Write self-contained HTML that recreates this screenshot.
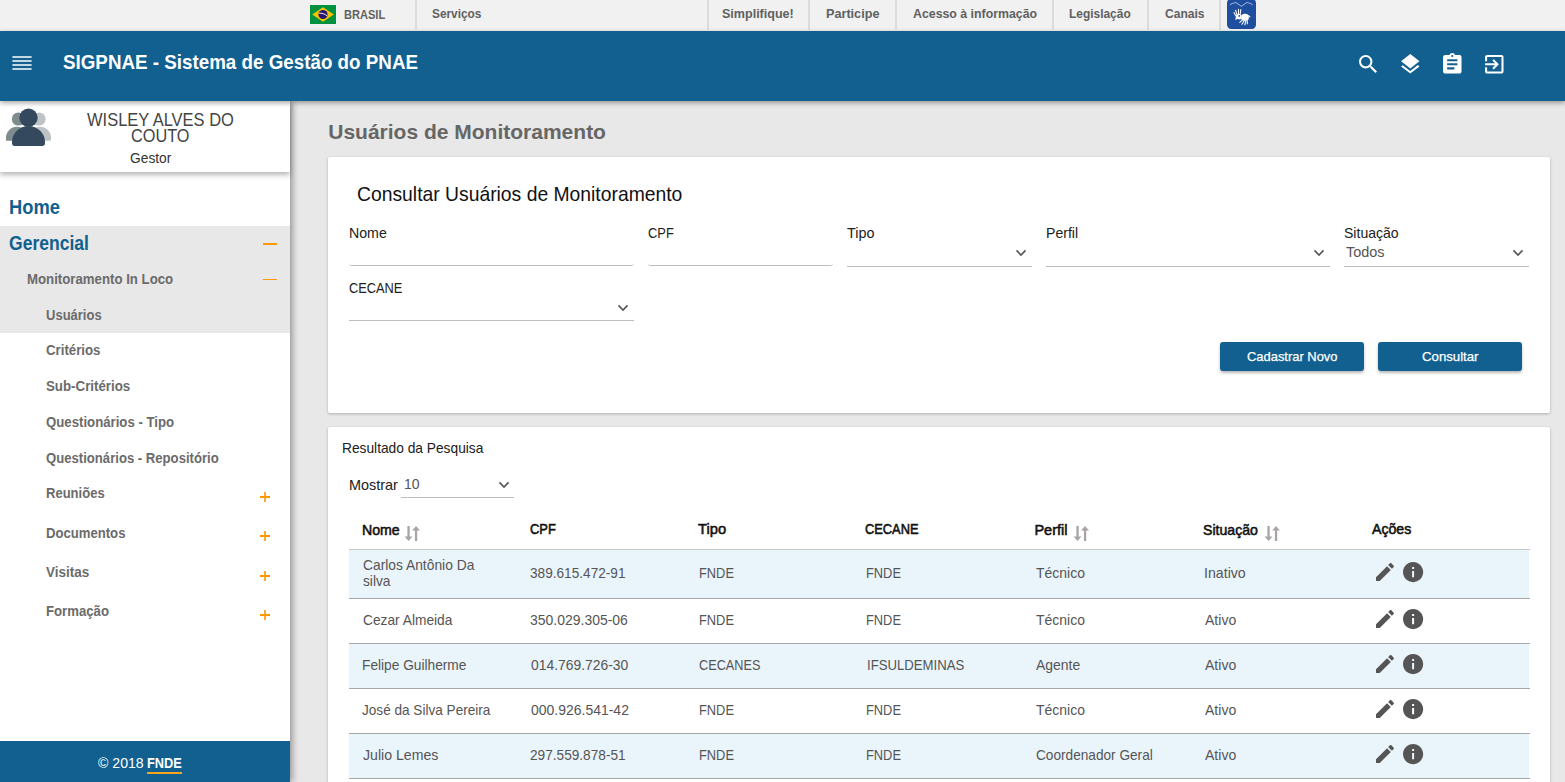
<!DOCTYPE html>
<html lang="pt-BR">
<head>
<meta charset="utf-8">
<title>SIGPNAE - Sistema de Gestão do PNAE</title>
<style>

*{box-sizing:border-box;margin:0;padding:0}
html,body{width:1565px;height:782px;overflow:hidden}
body{font-family:"Liberation Sans",sans-serif;background:#e8e8e8;color:#212121;position:relative;font-size:14px}
.t{position:absolute;white-space:nowrap;transform-origin:0 0;z-index:20}
.a{position:absolute}
#barra{left:0;top:0;width:1565px;height:31px;background:#f1f1f1}
.sep{position:absolute;top:0;width:2px;height:30px;background:#dcdcdc}
#hdr{left:0;top:31px;width:1565px;height:70px;background:#11608f;box-shadow:0 2px 5px rgba(0,0,0,.35);z-index:5}
#side{left:0;top:101px;width:290px;height:681px;background:#fff;box-shadow:2px 0 7px rgba(0,0,0,.4);z-index:3}
#user{left:0;top:0;width:290px;height:71px;background:#fff;box-shadow:0 3px 5px rgba(0,0,0,.28)}
.sel{left:0;width:290px;background:#e8e8e8}
.or{background:#ff9800}
#foot{left:0;top:640px;width:290px;height:41px;background:#11608f}
.card{left:328px;width:1222px;background:#fff;border-radius:2px;box-shadow:0 1px 3px rgba(0,0,0,.25)}
.ul{position:absolute;height:1px;background:#bdbdbd}
.inp{position:absolute;height:6px;border-bottom:1px solid #bdbdbd;border-radius:3px}
.btn{position:absolute;height:29px;width:144px;background:#11608f;border-radius:3px;box-shadow:0 2px 3px rgba(0,0,0,.28)}
.row{position:absolute;left:349px;width:1180px}
.odd{background:#eaf4fb}
.bl{position:absolute;left:349px;width:1181px;height:1px;background:#a8a8a8}
svg{position:absolute;overflow:visible}

</style>
</head>
<body>

<div class="a" id="barra">
  <svg style="left:310px;top:5px" width="26" height="19" viewBox="0 0 26 19"><rect width="26" height="19" fill="#00923f"/><path d="M13 2.3L23.8 9.5L13 16.7L2.2 9.5z" fill="#f8c300"/><circle cx="13" cy="9.5" r="4.6" fill="#28166f"/><path d="M8.9 8.2C11.5 7.9 14.8 8.9 17.2 10.8" fill="none" stroke="#fff" stroke-width="0.9"/></svg>
  <div class="sep" style="left:415px"></div>
  <div class="sep" style="left:707px"></div>
  <div class="sep" style="left:808px"></div>
  <div class="sep" style="left:895px"></div>
  <div class="sep" style="left:1052px"></div>
  <div class="sep" style="left:1147px"></div>
  <div class="sep" style="left:1219px"></div>
  <svg style="left:1227px;top:0" width="29" height="29" viewBox="0 0 29 29"><rect x="0" y="-1.2" width="29" height="30.2" rx="4.2" fill="#1f4e9e"/><path d="M2.8 5.2C4.2 3.6 6.2 3 9 2.6l5.3 3.7L19.6 2.6c2.8.4 4.8 1 6.2 2.6" fill="none" stroke="#b9c6e2" stroke-width="0.9"/><g stroke="#fff" stroke-linecap="round" fill="none"><path d="M11.5 14V9.2M13.2 14.2l.6-4.6M9.9 14.6L8.6 10.2M8.9 16L7 12.6" stroke-width="1.1"/><path d="M16.4 19.2l-3.6 3.2M17.6 20l-2.6 4.2M18.9 20.4l-1 4.2M20.1 20l.3 3.7M21.6 15.6l1.3 1.2" stroke-width="1.1"/></g><path d="M9.2 15.2c1.2-1.4 3.2-1.6 4.4-.9l1.4 1.6-1.6 3.6-2.9-.4-2.3 1z" fill="#fff"/><path d="M14.6 15c1.6-1.4 4.6-1.7 6.2-.6 1.2 1 1.4 3.6.6 5.4l-5 .9-2.4-1.8z" fill="#fff"/><circle cx="12.3" cy="15.9" r="0.9" fill="#1f4e9e"/></svg>
</div>
<div class="a" id="hdr">
  <svg style="left:0;top:0" width="40" height="70" viewBox="0 0 40 70"><path d="M12.4 25.15h19.2v1.7H12.4zM12.4 29.15h19.2v1.7H12.4zM12.4 33.15h19.2v1.7H12.4zM12.4 37.15h19.2v1.7H12.4z" fill="#fff"/></svg>
  <svg style="left:1356.1px;top:21px;z-index:20" width="24.6" height="24.6" viewBox="0 0 24 24"><path d="M15.5 14h-.79l-.28-.27C15.41 12.59 16 11.11 16 9.5 16 5.91 13.09 3 9.5 3S3 5.91 3 9.5 5.91 16 9.5 16c1.61 0 3.09-.59 4.23-1.57l.27.28v.79l5 4.99L20.49 19l-4.99-5zm-6 0C7.01 14 5 11.99 5 9.5S7.01 5 9.5 5 14 7.01 14 9.5 11.99 14 9.5 14z" fill="#fff"/></svg>
  <svg style="left:1398.1px;top:21px;z-index:20" width="24.6" height="24.6" viewBox="0 0 24 24"><path d="M11.99 18.54l-7.37-5.73L3 14.07l9 7 9-7-1.63-1.27-7.38 5.74zM12 16l7.36-5.73L21 9l-9-7-9 7 1.63 1.27L12 16z" fill="#fff"/></svg>
  <svg style="left:1440.1px;top:21px;z-index:20" width="24.6" height="24.6" viewBox="0 0 24 24"><path d="M19 3h-4.18C14.4 1.84 13.3 1 12 1c-1.3 0-2.4.84-2.82 2H5c-1.1 0-2 .9-2 2v14c0 1.1.9 2 2 2h14c1.1 0 2-.9 2-2V5c0-1.1-.9-2-2-2zm-7 0c.55 0 1 .45 1 1s-.45 1-1 1-1-.45-1-1 .45-1 1-1zm2 14H7v-2h7v2zm3-4H7v-2h10v2zm0-4H7V7h10v2z" fill="#fff"/></svg>
  <svg style="left:1482.1px;top:21px;z-index:20" width="24.6" height="24.6" viewBox="0 0 24 24"><path d="M10.09 15.59L11.5 17l5-5-5-5-1.41 1.41L12.67 11H3v2h9.67l-2.58 2.59zM19 3H5c-1.11 0-2 .9-2 2v4h2V5h14v14H5v-4H3v4c0 1.1.89 2 2 2h14c1.1 0 2-.9 2-2V5c0-1.1-.9-2-2-2z" fill="#fff"/></svg>
</div>
<div class="a" id="side">
  <div class="a" id="user">
    <svg style="left:4px;top:5px" width="50" height="42" viewBox="4 106 50 42">
      <circle cx="18.4" cy="119" r="6.6" fill="#7f8c8d"/><path d="M6 140.8v-3a11 11 0 0 1 22 0v3z" fill="#7f8c8d"/>
      <circle cx="39" cy="119" r="6.6" fill="#bdc3c7"/><path d="M29 140.8v-3a11 11 0 0 1 22 0v1.5a1.5 1.5 0 0 1-1.5 1.5z" fill="#bdc3c7"/>
      <circle cx="28.5" cy="117.8" r="9.2" fill="#34495e"/><path d="M12 143.5v-1.5a16.5 16 0 0 1 33 0v1.5a2.4 2.4 0 0 1-2.4 2.4h-28.2a2.4 2.4 0 0 1-2.4-2.4z" fill="#34495e"/>
    </svg>
  </div>
  <div class="a sel" style="top:125px;height:107px"></div>
  <div class="a or" style="left:263px;top:142px;width:14px;height:2px"></div>
  <div class="a or" style="left:263px;top:178px;width:14px;height:1px"></div>
  <div class="a" style="left:264px;top:391px;width:2px;height:10px;z-index:20;background:#ffa930"></div><div class="a or" style="left:260px;top:395px;width:10px;height:2px;z-index:20"></div>
  <div class="a" style="left:264px;top:430px;width:2px;height:10px;z-index:20;background:#ffa930"></div><div class="a or" style="left:260px;top:434px;width:10px;height:2px;z-index:20"></div>
  <div class="a" style="left:264px;top:470px;width:2px;height:10px;z-index:20;background:#ffa930"></div><div class="a or" style="left:260px;top:474px;width:10px;height:2px;z-index:20"></div>
  <div class="a" style="left:264px;top:509px;width:2px;height:10px;z-index:20;background:#ffa930"></div><div class="a or" style="left:260px;top:513px;width:10px;height:2px;z-index:20"></div>
  <div class="a" id="foot"></div>
  <div class="a" style="left:147px;top:671px;width:35px;height:2px;z-index:21;background:#f9a61c"></div>
</div>
<div class="a card" style="top:157px;height:256px">
  <div class="inp" style="left:21px;top:103px;width:285px"></div>
  <div class="inp" style="left:320px;top:103px;width:185px"></div>
  <div class="ul" style="left:519px;top:109px;width:185px"></div>
  <div class="ul" style="left:718px;top:109px;width:284px"></div>
  <div class="ul" style="left:1016px;top:109px;width:185px"></div>
  <div class="ul" style="left:21px;top:163px;width:285px"></div>
  <div class="btn" style="left:892px;top:185px"></div>
  <div class="btn" style="left:1050px;top:185px"></div>
</div>
<svg style="left:1016px;top:250px;z-index:20" width="10" height="6" viewBox="0 0 10 6"><path d="M0.5 0.4L5 5.1L9.5 0.4" fill="none" stroke="#555" stroke-width="1.6"/></svg><svg style="left:1314px;top:250px;z-index:20" width="10" height="6" viewBox="0 0 10 6"><path d="M0.5 0.4L5 5.1L9.5 0.4" fill="none" stroke="#555" stroke-width="1.6"/></svg><svg style="left:1513px;top:250px;z-index:20" width="10" height="6" viewBox="0 0 10 6"><path d="M0.5 0.4L5 5.1L9.5 0.4" fill="none" stroke="#555" stroke-width="1.6"/></svg><svg style="left:618px;top:305px;z-index:20" width="10" height="6" viewBox="0 0 10 6"><path d="M0.5 0.4L5 5.1L9.5 0.4" fill="none" stroke="#555" stroke-width="1.6"/></svg>
<div class="a card" style="top:427px;height:400px">
  <div class="ul" style="left:73px;top:70px;width:113px"></div>
</div>
<svg style="left:499px;top:482px;z-index:20" width="10" height="6" viewBox="0 0 10 6"><path d="M0.5 0.4L5 5.1L9.5 0.4" fill="none" stroke="#555" stroke-width="1.6"/></svg>
<div class="bl" style="top:549px;background:#c8c8c8"></div>
<div class="row odd" style="top:550px;height:48px"></div><div class="bl" style="top:598px"></div>
<svg style="left:1372.8px;top:560px;z-index:20" width="24" height="24" viewBox="0 0 24 24"><path d="M3 17.25V21h3.75L17.81 9.94l-3.75-3.75L3 17.25zM20.71 7.04c.39-.39.39-1.02 0-1.41l-2.34-2.34c-.39-.39-1.02-.39-1.41 0l-1.83 1.83 3.75 3.75 1.83-1.83z" fill="#555"/></svg><svg style="left:1400.5px;top:559.9px;z-index:20" width="24.2" height="24.2" viewBox="0 0 24 24"><path d="M12 2C6.48 2 2 6.48 2 12s4.48 10 10 10 10-4.48 10-10S17.52 2 12 2zm1 15h-2v-6h2v6zm0-8h-2V7h2v2z" fill="#555"/></svg>
<div class="row" style="top:599px;height:44px"></div><div class="bl" style="top:643px"></div>
<svg style="left:1372.8px;top:607px;z-index:20" width="24" height="24" viewBox="0 0 24 24"><path d="M3 17.25V21h3.75L17.81 9.94l-3.75-3.75L3 17.25zM20.71 7.04c.39-.39.39-1.02 0-1.41l-2.34-2.34c-.39-.39-1.02-.39-1.41 0l-1.83 1.83 3.75 3.75 1.83-1.83z" fill="#555"/></svg><svg style="left:1400.5px;top:606.9px;z-index:20" width="24.2" height="24.2" viewBox="0 0 24 24"><path d="M12 2C6.48 2 2 6.48 2 12s4.48 10 10 10 10-4.48 10-10S17.52 2 12 2zm1 15h-2v-6h2v6zm0-8h-2V7h2v2z" fill="#555"/></svg>
<div class="row odd" style="top:644px;height:44px"></div><div class="bl" style="top:688px"></div>
<svg style="left:1372.8px;top:652px;z-index:20" width="24" height="24" viewBox="0 0 24 24"><path d="M3 17.25V21h3.75L17.81 9.94l-3.75-3.75L3 17.25zM20.71 7.04c.39-.39.39-1.02 0-1.41l-2.34-2.34c-.39-.39-1.02-.39-1.41 0l-1.83 1.83 3.75 3.75 1.83-1.83z" fill="#555"/></svg><svg style="left:1400.5px;top:651.9px;z-index:20" width="24.2" height="24.2" viewBox="0 0 24 24"><path d="M12 2C6.48 2 2 6.48 2 12s4.48 10 10 10 10-4.48 10-10S17.52 2 12 2zm1 15h-2v-6h2v6zm0-8h-2V7h2v2z" fill="#555"/></svg>
<div class="row" style="top:689px;height:44px"></div><div class="bl" style="top:733px"></div>
<svg style="left:1372.8px;top:697px;z-index:20" width="24" height="24" viewBox="0 0 24 24"><path d="M3 17.25V21h3.75L17.81 9.94l-3.75-3.75L3 17.25zM20.71 7.04c.39-.39.39-1.02 0-1.41l-2.34-2.34c-.39-.39-1.02-.39-1.41 0l-1.83 1.83 3.75 3.75 1.83-1.83z" fill="#555"/></svg><svg style="left:1400.5px;top:696.9px;z-index:20" width="24.2" height="24.2" viewBox="0 0 24 24"><path d="M12 2C6.48 2 2 6.48 2 12s4.48 10 10 10 10-4.48 10-10S17.52 2 12 2zm1 15h-2v-6h2v6zm0-8h-2V7h2v2z" fill="#555"/></svg>
<div class="row odd" style="top:734px;height:44px"></div><div class="bl" style="top:778px"></div>
<svg style="left:1372.8px;top:742px;z-index:20" width="24" height="24" viewBox="0 0 24 24"><path d="M3 17.25V21h3.75L17.81 9.94l-3.75-3.75L3 17.25zM20.71 7.04c.39-.39.39-1.02 0-1.41l-2.34-2.34c-.39-.39-1.02-.39-1.41 0l-1.83 1.83 3.75 3.75 1.83-1.83z" fill="#555"/></svg><svg style="left:1400.5px;top:741.9px;z-index:20" width="24.2" height="24.2" viewBox="0 0 24 24"><path d="M12 2C6.48 2 2 6.48 2 12s4.48 10 10 10 10-4.48 10-10S17.52 2 12 2zm1 15h-2v-6h2v6zm0-8h-2V7h2v2z" fill="#555"/></svg>

<svg style="left:405px;top:526px;z-index:20" width="15" height="15" viewBox="0 0 15 15"><path d="M2.4 0h2.3v10.4h2.8l-3.95 4.6l-3.95-4.6h2.8z" fill="#a6a6a6"/><path d="M9.9 15h2.3V4.6h2.8l-3.95-4.6l-3.95 4.6h2.8z" fill="#aaa4a8"/></svg><svg style="left:1074px;top:526px;z-index:20" width="15" height="15" viewBox="0 0 15 15"><path d="M2.4 0h2.3v10.4h2.8l-3.95 4.6l-3.95-4.6h2.8z" fill="#a6a6a6"/><path d="M9.9 15h2.3V4.6h2.8l-3.95-4.6l-3.95 4.6h2.8z" fill="#aaa4a8"/></svg><svg style="left:1265px;top:526px;z-index:20" width="15" height="15" viewBox="0 0 15 15"><path d="M2.4 0h2.3v10.4h2.8l-3.95 4.6l-3.95-4.6h2.8z" fill="#a6a6a6"/><path d="M9.9 15h2.3V4.6h2.8l-3.95-4.6l-3.95 4.6h2.8z" fill="#aaa4a8"/></svg>
<div id="barra-brasil-links">
<a class="t" style="left:343.84px;top:7.00px;font:700 12.5px/16px 'Liberation Sans',sans-serif;color:#606060;transform:scaleX(0.8846)">BRASIL</a>
<a class="t" style="left:431.57px;top:6.00px;font:700 12.5px/16px 'Liberation Sans',sans-serif;color:#606060;transform:scaleX(0.9486)">Serviços</a>
<a class="t" style="left:722.15px;top:6.00px;font:700 12.5px/16px 'Liberation Sans',sans-serif;color:#606060;transform:scaleX(1.0028)">Simplifique!</a>
<a class="t" style="left:825.90px;top:6.00px;font:700 12.5px/16px 'Liberation Sans',sans-serif;color:#606060;transform:scaleX(1.0119)">Participe</a>
<a class="t" style="left:912.76px;top:6.00px;font:700 12.5px/16px 'Liberation Sans',sans-serif;color:#606060;transform:scaleX(0.9867)">Acesso à informação</a>
<a class="t" style="left:1068.95px;top:6.00px;font:700 12.5px/16px 'Liberation Sans',sans-serif;color:#606060;transform:scaleX(0.9547)">Legislação</a>
<a class="t" style="left:1164.52px;top:6.00px;font:700 12.5px/16px 'Liberation Sans',sans-serif;color:#606060;transform:scaleX(0.9625)">Canais</a>
</div>
<header>
<h1 class="t" style="left:63.04px;top:49.00px;font:700 20.5px/26px 'Liberation Sans',sans-serif;color:#fff;transform:scaleX(0.9165)">SIGPNAE - Sistema de Gestão do PNAE</h1>
</header>
<section id="perfil">
<span class="t" style="left:86.70px;top:108.00px;font:400 18.5px/24px 'Liberation Sans',sans-serif;color:#444;transform:scaleX(0.8909)">WISLEY ALVES DO</span>
<span class="t" style="left:131.22px;top:124.00px;font:400 18.5px/24px 'Liberation Sans',sans-serif;color:#444;transform:scaleX(0.8798)">COUTO</span>
<span class="t" style="left:129.78px;top:149.00px;font:400 14.5px/18px 'Liberation Sans',sans-serif;color:#333;transform:scaleX(0.9509)">Gestor</span>
</section>
<nav>
<a class="t" style="left:8.95px;top:195.00px;font:700 20px/25px 'Liberation Sans',sans-serif;color:#11608f;transform:scaleX(0.9163)">Home</a>
<a class="t" style="left:9.14px;top:231.00px;font:700 20px/25px 'Liberation Sans',sans-serif;color:#11608f;transform:scaleX(0.8764)">Gerencial</a>
<a class="t" style="left:27.19px;top:270.00px;font:700 14.5px/18px 'Liberation Sans',sans-serif;color:#6b6b6b;transform:scaleX(0.9120)">Monitoramento In Loco</a>
<a class="t" style="left:46.23px;top:306.00px;font:700 14.5px/18px 'Liberation Sans',sans-serif;color:#6b6b6b;transform:scaleX(0.8971)">Usuários</a>
<a class="t" style="left:46.35px;top:341.00px;font:700 14.5px/18px 'Liberation Sans',sans-serif;color:#6b6b6b;transform:scaleX(0.9136)">Critérios</a>
<a class="t" style="left:46.37px;top:377.00px;font:700 14.5px/18px 'Liberation Sans',sans-serif;color:#6b6b6b;transform:scaleX(0.9171)">Sub-Critérios</a>
<a class="t" style="left:46.19px;top:413.00px;font:700 14.5px/18px 'Liberation Sans',sans-serif;color:#6b6b6b;transform:scaleX(0.9106)">Questionários - Tipo</a>
<a class="t" style="left:46.25px;top:449.00px;font:700 14.5px/18px 'Liberation Sans',sans-serif;color:#6b6b6b;transform:scaleX(0.9045)">Questionários - Repositório</a>
<a class="t" style="left:46.03px;top:484.00px;font:700 14.5px/18px 'Liberation Sans',sans-serif;color:#6b6b6b;transform:scaleX(0.8986)">Reuniões</a>
<a class="t" style="left:46.00px;top:524.00px;font:700 14.5px/18px 'Liberation Sans',sans-serif;color:#6b6b6b;transform:scaleX(0.9044)">Documentos</a>
<a class="t" style="left:46.15px;top:563.00px;font:700 14.5px/18px 'Liberation Sans',sans-serif;color:#6b6b6b;transform:scaleX(0.9293)">Visitas</a>
<a class="t" style="left:45.89px;top:602.00px;font:700 14.5px/18px 'Liberation Sans',sans-serif;color:#6b6b6b;transform:scaleX(0.9082)">Formação</a>
</nav>
<footer>
<span class="t" style="left:98.06px;top:754.00px;font:400 14.5px/18px 'Liberation Sans',sans-serif;color:#fff;transform:scaleX(0.9728)">© 2018</span>
<b class="t" style="left:147.12px;top:754.00px;font:700 14.5px/18px 'Liberation Sans',sans-serif;color:#fff;transform:scaleX(0.8816)">FNDE</b>
</footer>
<main>
<h2 class="t" style="left:328.25px;top:118.00px;font:700 21px/27px 'Liberation Sans',sans-serif;color:#666">Usuários de Monitoramento</h2>

<section id="consulta">
<h3 class="t" style="left:356.62px;top:182.00px;font:400 19.75px/25px 'Liberation Sans',sans-serif;color:#111;transform:scaleX(0.9781)">Consultar Usuários de Monitoramento</h3>
<label class="t" style="left:348.80px;top:224.00px;font:400 14.5px/18px 'Liberation Sans',sans-serif;color:#212121;transform:scaleX(0.9773)">Nome</label>
<label class="t" style="left:648.05px;top:224.00px;font:400 14.5px/18px 'Liberation Sans',sans-serif;color:#212121;transform:scaleX(0.8877)">CPF</label>
<label class="t" style="left:847.25px;top:224.00px;font:400 14.5px/18px 'Liberation Sans',sans-serif;color:#212121;transform:scaleX(0.9907)">Tipo</label>
<label class="t" style="left:1045.99px;top:224.00px;font:400 14.5px/18px 'Liberation Sans',sans-serif;color:#212121;transform:scaleX(0.9696)">Perfil</label>
<label class="t" style="left:1344.27px;top:224.00px;font:400 14.5px/18px 'Liberation Sans',sans-serif;color:#212121;transform:scaleX(0.9683)">Situação</label>
<span class="t" style="left:1346.00px;top:243.00px;font:400 14.5px/18px 'Liberation Sans',sans-serif;color:#555;transform:scaleX(0.9973)">Todos</span>
<label class="t" style="left:349.25px;top:279.00px;font:400 14.5px/18px 'Liberation Sans',sans-serif;color:#212121;transform:scaleX(0.8840)">CECANE</label>
<span class="t" style="left:1247.18px;top:348.00px;font:400 13.5px/17px 'Liberation Sans',sans-serif;color:#fff;transform:scaleX(0.9571);-webkit-text-stroke:0.25px #fff">Cadastrar Novo</span>
<span class="t" style="left:1422.37px;top:348.00px;font:400 13.5px/17px 'Liberation Sans',sans-serif;color:#fff;transform:scaleX(0.9781);-webkit-text-stroke:0.25px #fff">Consultar</span>
</section>
<section id="resultado">
<h3 class="t" style="left:341.91px;top:439.00px;font:400 14.5px/18px 'Liberation Sans',sans-serif;color:#212121;transform:scaleX(0.9478)">Resultado da Pesquisa</h3>
<label class="t" style="left:348.73px;top:476.00px;font:400 14.5px/18px 'Liberation Sans',sans-serif;color:#212121;transform:scaleX(0.9952)">Mostrar</label>
<span class="t" style="left:404.23px;top:475.00px;font:400 14.5px/18px 'Liberation Sans',sans-serif;color:#555;transform:scaleX(0.9655)">10</span>
<strong class="t" style="left:361.66px;top:521.00px;font:400 14.5px/18px 'Liberation Sans',sans-serif;color:#111;transform:scaleX(0.9745);-webkit-text-stroke:0.55px #111">Nome</strong>
<strong class="t" style="left:529.53px;top:520.00px;font:400 14.5px/18px 'Liberation Sans',sans-serif;color:#111;transform:scaleX(0.8906);-webkit-text-stroke:0.55px #111">CPF</strong>
<strong class="t" style="left:698.24px;top:520.00px;font:400 14.5px/18px 'Liberation Sans',sans-serif;color:#111;transform:scaleX(1.0138);-webkit-text-stroke:0.55px #111">Tipo</strong>
<strong class="t" style="left:865.24px;top:520.00px;font:400 14.5px/18px 'Liberation Sans',sans-serif;color:#111;transform:scaleX(0.8856);-webkit-text-stroke:0.55px #111">CECANE</strong>
<strong class="t" style="left:1034.43px;top:521.00px;font:400 14.5px/18px 'Liberation Sans',sans-serif;color:#111;-webkit-text-stroke:0.55px #111">Perfil</strong>
<strong class="t" style="left:1203.37px;top:521.00px;font:400 14.5px/18px 'Liberation Sans',sans-serif;color:#111;transform:scaleX(0.9729);-webkit-text-stroke:0.55px #111">Situação</strong>
<strong class="t" style="left:1372.40px;top:520.00px;font:400 14.5px/18px 'Liberation Sans',sans-serif;color:#111;transform:scaleX(0.9748);-webkit-text-stroke:0.55px #111">Ações</strong>
<span class="t" style="left:362.64px;top:556.00px;font:400 14.5px/18px 'Liberation Sans',sans-serif;color:#555;transform:scaleX(0.9524)">Carlos Antônio Da</span>
<span class="t" style="left:362.53px;top:572.00px;font:400 14.5px/18px 'Liberation Sans',sans-serif;color:#555;transform:scaleX(0.9474)">silva</span>
<span class="t" style="left:530.43px;top:564.00px;font:400 14.5px/18px 'Liberation Sans',sans-serif;color:#555;transform:scaleX(0.9403)">389.615.472-91</span>
<span class="t" style="left:698.56px;top:564.00px;font:400 14.5px/18px 'Liberation Sans',sans-serif;color:#555;transform:scaleX(0.8855)">FNDE</span>
<span class="t" style="left:866.46px;top:564.00px;font:400 14.5px/18px 'Liberation Sans',sans-serif;color:#555;transform:scaleX(0.8855)">FNDE</span>
<span class="t" style="left:1035.67px;top:564.00px;font:400 14.5px/18px 'Liberation Sans',sans-serif;color:#555;transform:scaleX(0.9632)">Técnico</span>
<span class="t" style="left:1204.49px;top:564.00px;font:400 14.5px/18px 'Liberation Sans',sans-serif;color:#555;transform:scaleX(0.9769)">Inativo</span>
<span class="t" style="left:362.55px;top:611.00px;font:400 14.5px/18px 'Liberation Sans',sans-serif;color:#555;transform:scaleX(0.9478)">Cezar Almeida</span>
<span class="t" style="left:530.46px;top:611.00px;font:400 14.5px/18px 'Liberation Sans',sans-serif;color:#555;transform:scaleX(0.9636)">350.029.305-06</span>
<span class="t" style="left:698.56px;top:611.00px;font:400 14.5px/18px 'Liberation Sans',sans-serif;color:#555;transform:scaleX(0.8855)">FNDE</span>
<span class="t" style="left:866.46px;top:611.00px;font:400 14.5px/18px 'Liberation Sans',sans-serif;color:#555;transform:scaleX(0.8855)">FNDE</span>
<span class="t" style="left:1035.67px;top:611.00px;font:400 14.5px/18px 'Liberation Sans',sans-serif;color:#555;transform:scaleX(0.9632)">Técnico</span>
<span class="t" style="left:1204.70px;top:611.00px;font:400 14.5px/18px 'Liberation Sans',sans-serif;color:#555;transform:scaleX(0.9685)">Ativo</span>
<span class="t" style="left:362.25px;top:656.00px;font:400 14.5px/18px 'Liberation Sans',sans-serif;color:#555;transform:scaleX(0.9456)">Felipe Guilherme</span>
<span class="t" style="left:530.67px;top:656.00px;font:400 14.5px/18px 'Liberation Sans',sans-serif;color:#555;transform:scaleX(0.9577)">014.769.726-30</span>
<span class="t" style="left:698.69px;top:656.00px;font:400 14.5px/18px 'Liberation Sans',sans-serif;color:#555;transform:scaleX(0.8764)">CECANES</span>
<span class="t" style="left:866.65px;top:656.00px;font:400 14.5px/18px 'Liberation Sans',sans-serif;color:#555;transform:scaleX(0.9078)">IFSULDEMINAS</span>
<span class="t" style="left:1035.85px;top:656.00px;font:400 14.5px/18px 'Liberation Sans',sans-serif;color:#555;transform:scaleX(0.9613)">Agente</span>
<span class="t" style="left:1204.70px;top:656.00px;font:400 14.5px/18px 'Liberation Sans',sans-serif;color:#555;transform:scaleX(0.9685)">Ativo</span>
<span class="t" style="left:362.27px;top:701.00px;font:400 14.5px/18px 'Liberation Sans',sans-serif;color:#555;transform:scaleX(0.9369)">José da Silva Pereira</span>
<span class="t" style="left:530.79px;top:701.00px;font:400 14.5px/18px 'Liberation Sans',sans-serif;color:#555;transform:scaleX(0.9637)">000.926.541-42</span>
<span class="t" style="left:698.56px;top:701.00px;font:400 14.5px/18px 'Liberation Sans',sans-serif;color:#555;transform:scaleX(0.8855)">FNDE</span>
<span class="t" style="left:866.46px;top:701.00px;font:400 14.5px/18px 'Liberation Sans',sans-serif;color:#555;transform:scaleX(0.8855)">FNDE</span>
<span class="t" style="left:1035.67px;top:701.00px;font:400 14.5px/18px 'Liberation Sans',sans-serif;color:#555;transform:scaleX(0.9632)">Técnico</span>
<span class="t" style="left:1204.70px;top:701.00px;font:400 14.5px/18px 'Liberation Sans',sans-serif;color:#555;transform:scaleX(0.9685)">Ativo</span>
<span class="t" style="left:362.51px;top:746.00px;font:400 14.5px/18px 'Liberation Sans',sans-serif;color:#555;transform:scaleX(0.9739)">Julio Lemes</span>
<span class="t" style="left:530.16px;top:746.00px;font:400 14.5px/18px 'Liberation Sans',sans-serif;color:#555;transform:scaleX(0.9412)">297.559.878-51</span>
<span class="t" style="left:698.56px;top:746.00px;font:400 14.5px/18px 'Liberation Sans',sans-serif;color:#555;transform:scaleX(0.8855)">FNDE</span>
<span class="t" style="left:866.46px;top:746.00px;font:400 14.5px/18px 'Liberation Sans',sans-serif;color:#555;transform:scaleX(0.8855)">FNDE</span>
<span class="t" style="left:1035.64px;top:746.00px;font:400 14.5px/18px 'Liberation Sans',sans-serif;color:#555;transform:scaleX(0.9408)">Coordenador Geral</span>
<span class="t" style="left:1204.70px;top:746.00px;font:400 14.5px/18px 'Liberation Sans',sans-serif;color:#555;transform:scaleX(0.9685)">Ativo</span>
</section></main>

</body>
</html>
